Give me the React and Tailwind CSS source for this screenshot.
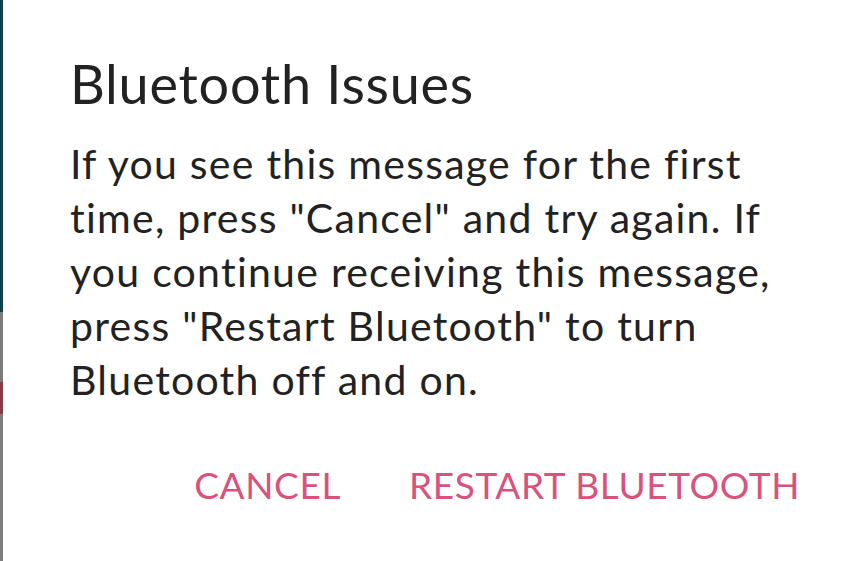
export default function App() {
  return (
    <div
      className="flex h-[561px] w-[866px] overflow-hidden bg-white [font-variant-ligatures:none]"
      style={{ fontFamily: 'Lato, "Open Sans", sans-serif' }}
    >
      {/* sliver of the screen behind the dialog */}
      <div className="flex w-[3px] flex-col">
        <div className="h-[312px] bg-[#123f4b]" />
        <div className="h-[70px] bg-[#7a7a7a]" />
        <div className="h-[32px] bg-[#8a3a44]" />
        <div className="flex-1 bg-[#7c7c7c]" />
      </div>

      <div className="flex flex-1 flex-col rounded-tl-[6px] bg-white pl-[67px] pr-[64px] pt-[52px]">
        <h2 className="text-[54px] leading-[64px] tracking-[0.75px] text-[#222222]">Bluetooth Issues</h2>

        <p className="mt-[21px] text-[41px] leading-[54px] tracking-[1.25px] text-[#222222]">
          If you see this message for the first time, press "Cancel" and try again. If you continue receiving this
          message, press "Restart Bluetooth" to turn Bluetooth off and on.
        </p>

        <div className="mt-[50px] flex justify-end gap-[68px] pr-[2px] text-[37px] tracking-[0.6px] text-[#d9527c]">
          <button>CANCEL</button>
          <button>RESTART BLUETOOTH</button>
        </div>
      </div>
    </div>
  );
}
